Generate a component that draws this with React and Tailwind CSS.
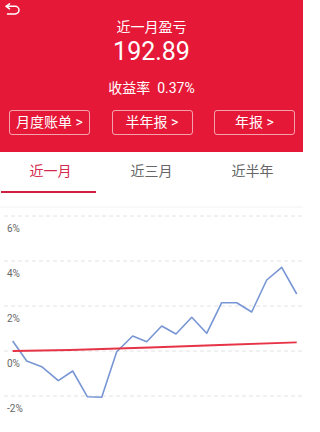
import React, { useState } from "react";

const font = { fontFamily: '"Roboto", "Noto Sans CJK SC", sans-serif' };

const blue = [
  [12.7, 141], [26.7, 161], [41.7, 166.7], [58.3, 180.7], [72.7, 171],
  [87.3, 196.7], [101.7, 197.3], [116.7, 151.7], [132.7, 136], [146.7, 141.7],
  [161.7, 126], [176, 134], [191.7, 117.3], [206.7, 133.3], [221.7, 102.7],
  [236.7, 102.7], [251.7, 112], [266.7, 80], [281.7, 67.3], [296.7, 94],
];

const grid = [
  { y: 16, label: "6%" },
  { y: 61, label: "4%" },
  { y: 106, label: "2%" },
  { y: 151, label: "0%" },
  { y: 196, label: "-2%" },
];

const BackIcon = () => (
  <svg width="16" height="13" viewBox="0 0 16 13" fill="none" stroke="#fff" strokeWidth="1.5" strokeLinecap="round" strokeLinejoin="round">
    <path d="M4.5 0.8 1.2 3.3 4.5 5.8" />
    <path d="M1.2 3.3h9a3.8 3.8 0 0 1 0 7.6H2.5" />
  </svg>
);

const Chart = () => (
  <svg width="303" height="238" viewBox="0 -6 303 238" className="block">
    <line x1="0" y1="7" x2="303" y2="7" stroke="#f2f2f2" strokeWidth="1" />
    {grid.map((g) => (
      <g key={g.label}>
        <line x1="4" y1={g.y} x2="303" y2={g.y} stroke="#e2e2e2" strokeWidth="1" strokeDasharray="4 3" />
        <text x="7" y={g.y + 15.5} fontSize="10" fill="#666" style={font}>
          {g.label}
        </text>
      </g>
    ))}
    <polyline
      points={blue.map((p) => p.join(",")).join(" ")}
      fill="none"
      stroke="#7896d4"
      strokeWidth="1.6"
      strokeLinejoin="round"
    />
    <polyline
      points="12.7,151 70,150 150,147.5 220,145 296.7,142.3"
      fill="none"
      stroke="#e63346"
      strokeWidth="1.8"
    />
  </svg>
);

export default function App() {
  const [tab, setTab] = useState(0);
  const tabs = ["近一月", "近三月", "近半年"];

  return (
    <div className="w-[303px] h-[432px] overflow-hidden bg-white" style={font}>
      {/* header */}
      <div className="h-[152px] bg-[#e61838] text-white flex flex-col">
        <div className="h-[18px] pl-[5px] pt-[3px]">
          <BackIcon />
        </div>
        <div className="text-center text-[14px] leading-[18px]">近一月盈亏</div>
        <div className="text-center text-[25px] leading-[28px] mt-[2px]">192.89</div>
        <div className="text-center text-[14px] leading-[18px] mt-[13px]">
          收益率&nbsp;&nbsp;0.37%
        </div>
        <div className="flex justify-between pl-[9px] pr-[8px] mt-[13px]">
          {["月度账单 >", "半年报 >", "年报 >"].map((b) => (
            <button
              key={b}
              className="w-[81px] h-[25px] border border-white/60 rounded-[3px] text-[14px] leading-[23px] text-white text-center"
            >
              {b}
            </button>
          ))}
        </div>
      </div>

      {/* tabs */}
      <div className="flex">
        {tabs.map((t, i) => (
          <div key={t} className="w-1/3 flex flex-col cursor-pointer" onClick={() => setTab(i)}>
            <div
              className={
                "h-[39px] flex items-center justify-center text-[14px] " +
                (tab === i ? "text-[#d42a4e]" : "text-[#666]")
              }
            >
              {t}
            </div>
            <div className={"h-[2px] ml-[1px] w-[95px] " + (tab === i ? "bg-[#d01f3f]" : "bg-transparent")} />
          </div>
        ))}
      </div>

      {/* chart */}
      <div className="mt-[1px]">
        <Chart />
      </div>
    </div>
  );
}
